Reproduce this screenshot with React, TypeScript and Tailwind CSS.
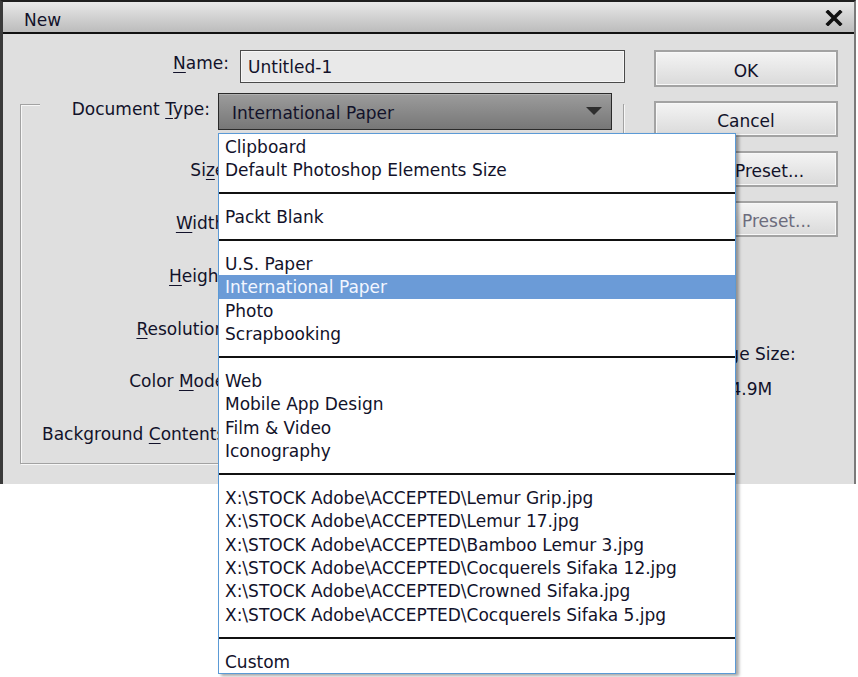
import React from "react";

const FONT = "font-['DejaVu_Sans',sans-serif]";

type Entry = { label: string; selected?: boolean } | "sep";

const entries: Entry[] = [
  { label: "Clipboard" },
  { label: "Default Photoshop Elements Size" },
  "sep",
  { label: "Packt Blank" },
  "sep",
  { label: "U.S. Paper" },
  { label: "International Paper", selected: true },
  { label: "Photo" },
  { label: "Scrapbooking" },
  "sep",
  { label: "Web" },
  { label: "Mobile App Design" },
  { label: "Film & Video" },
  { label: "Iconography" },
  "sep",
  { label: "X:\\STOCK Adobe\\ACCEPTED\\Lemur Grip.jpg" },
  { label: "X:\\STOCK Adobe\\ACCEPTED\\Lemur 17.jpg" },
  { label: "X:\\STOCK Adobe\\ACCEPTED\\Bamboo Lemur 3.jpg" },
  { label: "X:\\STOCK Adobe\\ACCEPTED\\Cocquerels Sifaka 12.jpg" },
  { label: "X:\\STOCK Adobe\\ACCEPTED\\Crowned Sifaka.jpg" },
  { label: "X:\\STOCK Adobe\\ACCEPTED\\Cocquerels Sifaka 5.jpg" },
  "sep",
  { label: "Custom" },
];

// label with the access-key letter underlined
function Key({ text, k }: { text: string; k: number }) {
  return (
    <>
      {text.slice(0, k)}
      <span className="underline underline-offset-[3px] decoration-1">{text[k]}</span>
      {text.slice(k + 1)}
    </>
  );
}

function Button({ children, disabled }: { children: React.ReactNode; disabled?: boolean }) {
  return (
    <div
      className={
        "flex items-center justify-center pt-[6px] border-2 border-[#a3a3a3] bg-gradient-to-b from-[#f4f4f4] to-[#dadada] shadow-[inset_0_0_0_1px_#f8f8f8] " +
        (disabled ? "text-[#6c6c7c]" : "")
      }
    >
      {children}
    </div>
  );
}

// labels run under the open list, so they are clipped at its left edge
function FieldRow({ children }: { children: React.ReactNode }) {
  return (
    <div className="h-[52.8px] flex items-center">
      <div className="w-[197px] overflow-hidden">
        <div className="w-[210px] text-right whitespace-nowrap">{children}</div>
      </div>
    </div>
  );
}

function DropdownList() {
  return (
    <div className="absolute left-[218px] top-[133px] w-[518px] pt-[1px] border border-[#5b9ad6] bg-white shadow-[3px_2px_3px_rgba(0,0,0,0.35)]">
      {entries.map((e, i) =>
        e === "sep" ? (
          <div key={i} className="h-[23.4px] flex items-center">
            <div className="h-[2px] w-full bg-[#111]" />
          </div>
        ) : (
          <div
            key={i}
            className={
              "h-[23.4px] leading-[22.4px] pt-[1px] pl-[6px] whitespace-nowrap " +
              (e.selected ? "bg-[#6b9bd7] text-[#f2f6ff]" : "")
            }
          >
            {e.label}
          </div>
        ),
      )}
    </div>
  );
}

export default function App() {
  return (
    <div className={`relative w-[858px] h-[677px] bg-white overflow-hidden text-[17px] text-[#12122a] ${FONT}`}>
      <div className="w-[856px] h-[484px] flex flex-col border-l-[3px] border-t-2 border-r-2 border-l-[#3a3a3a] border-t-[#1e1e1e] border-r-[#7a7a7a] bg-[#dfdfdf]">
        {/* title bar */}
        <div className="h-[32px] shrink-0 flex items-center justify-between pl-[21px] pr-[11px] bg-gradient-to-b from-[#e8e8e8] to-[#bcbcbc] border-b-2 border-[#111]">
          <span className="pt-[8px]">New</span>
          <svg width="18" height="16" viewBox="0 0 18 16" className="mt-[1px]">
            <path d="M3 2 L15 14 M15 2 L3 14" stroke="#111" strokeWidth="3.6" strokeLinecap="square" />
          </svg>
        </div>

        <div className="flex flex-1">
          {/* left: form */}
          <div className="w-[637px]">
            <div className="mt-[16px] flex items-start">
              <div className="w-[226px] mt-[1px] text-right">
                <Key text="Name:" k={0} />
              </div>
              <div className="ml-[11px] w-[385px] h-[33px] flex items-center pl-[7px] pt-[2px] border border-[#4a4a4a] bg-[#e9e9e9] shadow-[inset_0_0_0_1px_#f6f6f6]">
                Untitled-1
              </div>
            </div>

            <div className="mt-[21px] ml-[17px] w-[604px] h-[360px] border border-[#a2a2a2] shadow-[inset_1px_1px_0_#f7f7f7,1px_1px_0_#f7f7f7]">
              <div className="-mt-[13px] h-[38px] flex items-center">
                <div className="w-[19px] self-stretch" />
                <div className="flex-1 self-stretch flex items-center bg-[#dfdfdf]">
                  <div className="w-[170px] -mt-[2px] text-right whitespace-nowrap">
                    <Key text="Document Type:" k={9} />
                  </div>
                  <div className="ml-[8px] w-[394px] h-[37px] flex items-center justify-between pl-[13px] pr-[8px] border border-[#2a2a2a] bg-gradient-to-b from-[#9c9c9c] to-[#777777] shadow-[inset_0_1px_0_#b0b0b0]">
                    <span className="pt-[5px]">International Paper</span>
                    <svg width="16" height="8" viewBox="0 0 16 8" className="mr-[1px]">
                      <path d="M0 0 H16 L8 8 Z" fill="#2e2e2e" />
                    </svg>
                  </div>
                </div>
              </div>
              <div className="mt-[14.5px]">
                <FieldRow>
                  <Key text="Size:" k={2} />
                </FieldRow>
                <FieldRow>
                  <Key text="Width:" k={0} />
                </FieldRow>
                <FieldRow>
                  <Key text="Height:" k={0} />
                </FieldRow>
                <FieldRow>
                  <Key text="Resolution:" k={0} />
                </FieldRow>
                <FieldRow>
                  <Key text="Color Mode:" k={6} />
                </FieldRow>
                <FieldRow>
                  <Key text="Background Contents:" k={11} />
                </FieldRow>
              </div>
            </div>
          </div>

          {/* right: buttons */}
          <div className="ml-[14px] w-[184px] flex flex-col">
            <div className="mt-[16px] h-[37px] grid">
              <Button>OK</Button>
            </div>
            <div className="mt-[14px] h-[36px] grid">
              <Button>Cancel</Button>
            </div>
            <div className="mt-[14px] h-[36px] grid">
              <Button>Save Preset...</Button>
            </div>
            <div className="mt-[14px] h-[36px] grid">
              <Button disabled>Delete Preset...</Button>
            </div>
            <div className="mt-[107px] leading-[20px] text-center">Image Size:</div>
            <div className="mt-[15px] leading-[20px] text-center">34.9M</div>
          </div>
        </div>
      </div>

      <DropdownList />
    </div>
  );
}
